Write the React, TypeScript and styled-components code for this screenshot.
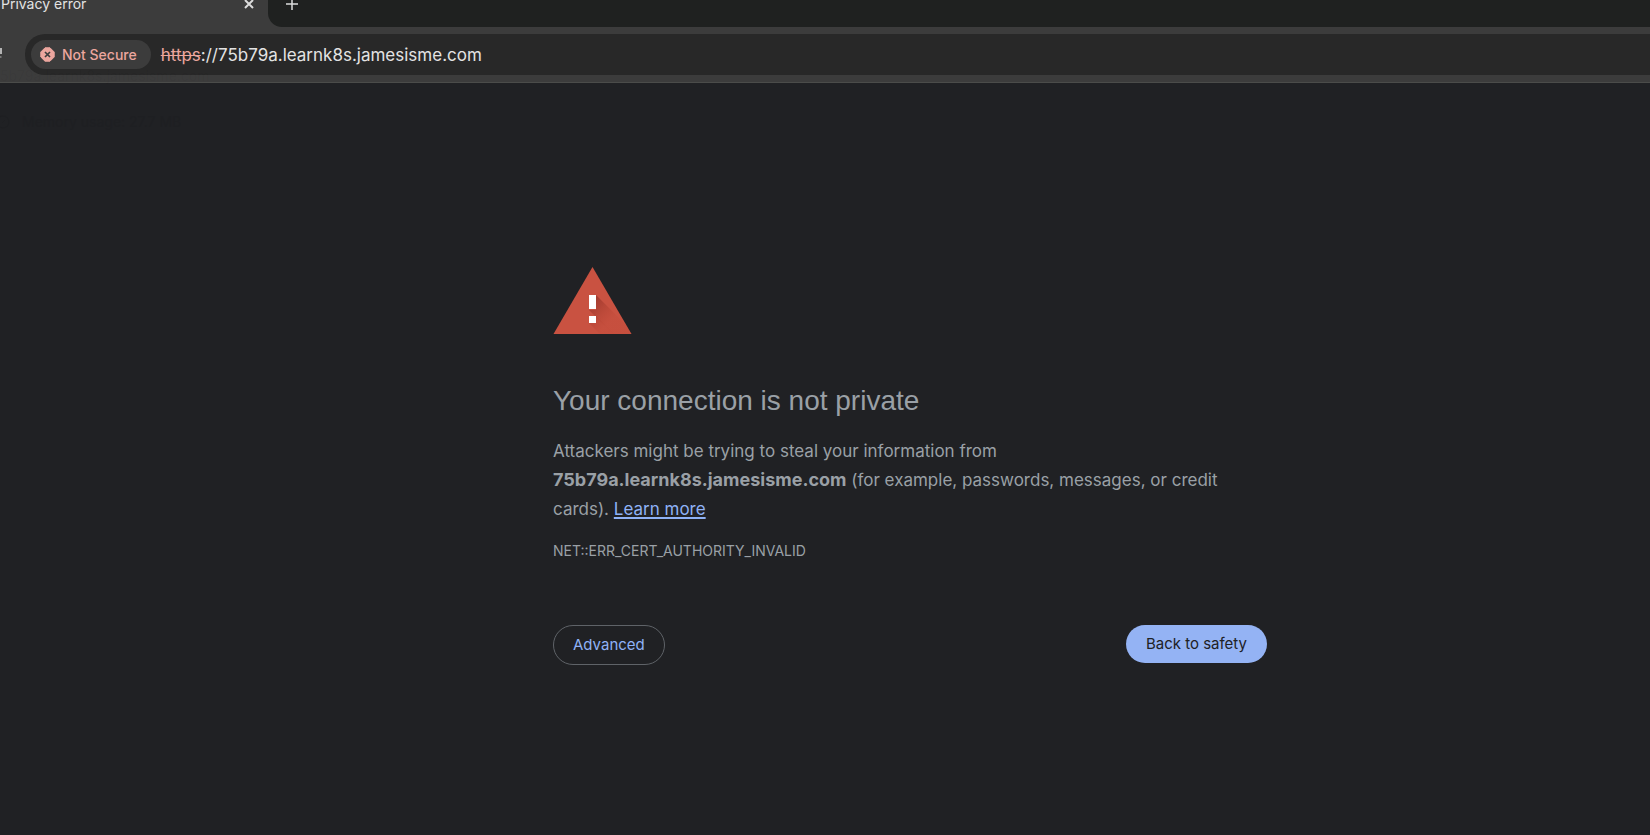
import React from "react";
import styled, { createGlobalStyle } from "styled-components";

const sans = `Inter, "Liberation Sans", sans-serif`;

const Global = createGlobalStyle`
  *, *::before, *::after { box-sizing: border-box; }
  body {
    margin: 0;
    background: #202124;
    font-family: ${sans};
    overflow-x: hidden;
  }
`;

const Browser = styled.div`
  position: relative;
  min-height: 100vh;
  display: flex;
  flex-direction: column;
  background: #202124;
`;

const TabStrip = styled.header`
  display: flex;
  height: 27px;
  background: #3c3c3c;
`;

const Tab = styled.div`
  flex: none;
  width: 268px;
  height: 8px;
  padding: 0 12px 0 1px;
  display: flex;
  align-items: center;
  justify-content: space-between;
  color: #e3e3e3;
`;

const TabTitle = styled.span`
  font-size: 14px;
  line-height: 20px;
`;

const StripRest = styled.div`
  flex: 1;
  padding-left: 17px;
  background: #1f2120;
  border-bottom-left-radius: 14px;
`;

const GlyphButton = styled.button`
  display: flex;
  align-items: center;
  justify-content: center;
  width: 14px;
  height: 8px;
  padding: 0;
  border: 0;
  background: none;
  color: #dcdcdc;

  svg { flex: none; overflow: visible; }
`;

const Toolbar = styled.div`
  display: flex;
  align-items: center;
  height: 56px;
  background: #3c3c3c;
  border-bottom: 1px solid #4b4c4a;
`;

const EdgeButton = styled.button`
  flex: none;
  display: flex;
  align-items: center;
  width: 25px;
  height: 20px;
  padding: 0;
  border: 0;
  background: none;
`;

const AddressBar = styled.div`
  flex: 1;
  display: flex;
  align-items: center;
  gap: 10px;
  height: 41px;
  padding-left: 6px;
  background: #282828;
  border-radius: 20px 0 0 20px;
`;

const SecurityChip = styled.button`
  display: flex;
  align-items: center;
  gap: 7px;
  height: 29px;
  padding: 0 14px 0 9px;
  border: 0;
  border-radius: 15px;
  background: #3c3c3c;
  color: #eca69e;
  font: 500 14px/20px ${sans};
`;

const Url = styled.div`
  font-size: 17px;
  line-height: 20px;
  color: #e3e3e3;

  s { color: #eca69e; }
`;

const HoverCard = styled.div`
  position: absolute;
  top: 66px;
  left: 0;
  display: flex;
  flex-direction: column;
  gap: 26px;
  pointer-events: none;
`;

const CardHost = styled.span`
  font-size: 14px;
  line-height: 20px;
  color: rgba(0, 0, 0, 0.05);
`;

const CardMemory = styled.span`
  display: flex;
  align-items: center;
  gap: 12px;
  font-size: 14px;
  line-height: 20px;
  color: #1e1f22;
`;

const Page = styled.main`
  flex: 1;
  display: grid;
  grid-template-columns: 553fr minmax(0, 714px) 383fr;
  align-content: start;
  padding-top: 183px;
  color: #9aa0a6;
`;

const Warning = styled.section`
  grid-column: 2;
`;

const Heading = styled.h1`
  margin: 48px 0 18px;
  font: 400 28px/36px "Liberation Sans", sans-serif;
`;

const Message = styled.p`
  margin: 0;
  font-size: 17px;
  line-height: 29px;
`;

const Host = styled.strong`
  font-size: 18px;
  line-height: 20px;
`;

const LearnMore = styled.a`
  color: #8fb2f6;
  text-decoration: underline 2px;
  text-underline-offset: 2px;
`;

const ErrorCode = styled.div`
  margin-top: 17px;
  font-size: 14px;
  line-height: 20px;
`;

const Actions = styled.div`
  display: flex;
  align-items: flex-start;
  justify-content: space-between;
  margin-top: 64px;
`;

const Pill = styled.button<{ $primary?: boolean }>`
  height: ${(p) => (p.$primary ? 38 : 40)}px;
  padding: 0 ${(p) => (p.$primary ? 20 : 19)}px;
  border: ${(p) => (p.$primary ? "0" : "1px solid #5f6368")};
  border-radius: 20px;
  background: ${(p) => (p.$primary ? "#94b3f4" : "transparent")};
  color: ${(p) => (p.$primary ? "#202124" : "#8fb2f6")};
  font: 400 15px/20px ${sans};
`;

const WarningIcon = () => (
  <svg width="80" height="69" viewBox="0 0 80 69" display="block" aria-hidden="true">
    <defs>
      <linearGradient id="shade" gradientUnits="userSpaceOnUse" x1="38" y1="38" x2="56" y2="56">
        <stop offset="0" stopColor="#8c2f26" stopOpacity="0.6" />
        <stop offset="1" stopColor="#b8402f" stopOpacity="0.15" />
      </linearGradient>
      <clipPath id="tri"><path d="M39.500 1L78.500 68H.5z" /></clipPath>
    </defs>
    <path d="M39.500 1L78.500 68H.5z" fill="#c95241" />
    <g clipPath="url(#tri)" fill="url(#shade)">
      <path d="M43 29L82 68H60L36 44h7z" />
      <path d="M43 50L61 68H47L36 57h7z" />
    </g>
    <path d="M36 29h7v14h-7zM36 50h7v7h-7z" fill="#fff" />
  </svg>
);

export default function App() {
  return (
    <Browser>
      <Global />
      <TabStrip>
        <Tab>
          <TabTitle>Privacy error</TabTitle>
          <GlyphButton aria-label="Close tab">
            <svg width="10" height="10" viewBox="0 0 10 10" stroke="currentColor" strokeWidth="2">
              <path d="M1 1l8 8M9 1l-8 8" />
            </svg>
          </GlyphButton>
        </Tab>
        <StripRest>
          <GlyphButton aria-label="New tab">
            <svg width="12" height="12" viewBox="0 0 12 12" stroke="currentColor" strokeWidth="1.5">
              <path d="M0 6h12M6 0v12" />
            </svg>
          </GlyphButton>
        </StripRest>
      </TabStrip>
      <Toolbar>
        <EdgeButton aria-label="Reload">
          <svg width="3" height="14" viewBox="0 0 3 14">
            <path d="M0 0h2v6H0z" fill="#b4b4b4" />
            <path d="M0 8h1.500v2H0z" fill="#777" />
          </svg>
        </EdgeButton>
        <AddressBar>
          <SecurityChip>
            <svg width="15" height="15" viewBox="0 0 15 15">
              <path
                d="M5 .8h5l4.200 4.200v5L10 14.200H5L.8 10V5z"
                fill="#eca69e"
                stroke="#eca69e"
                strokeLinejoin="round"
              />
              <path d="M5 5l5 5M10 5l-5 5" stroke="#3c3c3c" strokeWidth="1.700" />
            </svg>
            Not Secure
          </SecurityChip>
          <Url><s>https</s>://75b79a.learnk8s.jamesisme.com</Url>
        </AddressBar>
      </Toolbar>
      <Page>
        <Warning>
          <WarningIcon />
          <Heading>Your connection is not private</Heading>
          <Message>
            Attackers might be trying to steal your information from{" "}
            <Host>75b79a.learnk8s.jamesisme.com</Host> (for example, passwords, messages, or credit
            cards). <LearnMore href="#learn-more">Learn more</LearnMore>
          </Message>
          <ErrorCode>NET::ERR_CERT_AUTHORITY_INVALID</ErrorCode>
          <Actions>
            <Pill>Advanced</Pill>
            <Pill $primary>Back to safety</Pill>
          </Actions>
        </Warning>
      </Page>
      <HoverCard aria-hidden="true">
        <CardHost>5b79a.learnk8s.jamesisme.com</CardHost>
        <CardMemory>
          <svg width="10" height="14" viewBox="0 0 10 14" fill="none" stroke="currentColor">
            <circle cx="3" cy="7" r="6" />
            <path d="M2 8l3-3" />
          </svg>
          Memory usage: 27.7 MB
        </CardMemory>
      </HoverCard>
    </Browser>
  );
}
